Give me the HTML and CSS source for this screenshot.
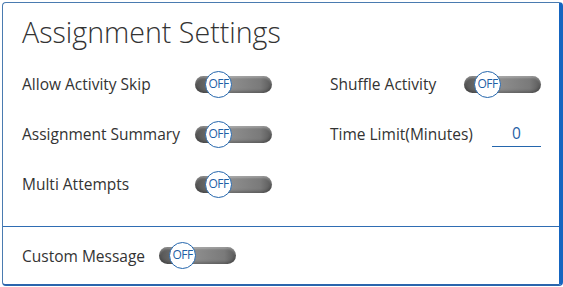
FILE: index.html
```html
<!DOCTYPE html>
<html lang="en">
<head>
    <meta charset="UTF-8">
    <meta name="viewport" content="width=device-width, initial-scale=1.0">
    <title>Assignment Settings</title>
    <link rel="stylesheet" href="styles.css">
</head>
<body>

<div class="card">
    <div class="card-top">
        <h1 class="title">Assignment Settings</h1>
        <div class="settings">
            <span class="label">Allow Activity Skip</span>
            <div class="toggle"><span class="knob">OFF</span></div>
            <span class="label">Shuffle Activity</span>
            <div class="toggle"><span class="knob">OFF</span></div>

            <span class="label">Assignment Summary</span>
            <div class="toggle"><span class="knob">OFF</span></div>
            <span class="label">Time Limit(Minutes)</span>
            <div class="time-input"><input type="text" value="0"></div>

            <span class="label">Multi Attempts</span>
            <div class="toggle"><span class="knob">OFF</span></div>
        </div>
    </div>
    <div class="card-bottom">
        <span class="label">Custom Message</span>
        <div class="toggle"><span class="knob">OFF</span></div>
    </div>
</div>

</body>
</html>
```

FILE: styles.css
```css
body {
    margin: 0;
    padding: 2px 0 0 2px;
    font-family: "Open Sans", "Liberation Sans", sans-serif;
    color: #333;
    background: #fff;
}
.card {
    width: 561px;
    height: 284px;
    box-sizing: border-box;
    border: 1px solid #4a7bb0;
    border-right: 4px solid #1565c0;
    border-bottom: 2px solid #2a65ad;
    border-radius: 4px;
    display: flex;
    flex-direction: column;
}
.card-top {
    padding: 11px 0 17px 19px;
    border-bottom: 1px solid #2f6db3;
}
.title {
    margin: 0 0 9px 0;
    font-size: 28.6px;
    font-weight: 300;
    line-height: 36px;
    color: #333;
}
.settings {
    display: grid;
    grid-template-columns: 173px 135px 134px 77px;
    grid-auto-rows: 50px;
    align-items: center;
}
.label {
    font-size: 15.5px;
    white-space: nowrap;
}
.toggle {
    position: relative;
    width: 77px;
    height: 17px;
    border-radius: 9px;
    background: linear-gradient(to right, #555, #8e8e8e 45%, #7a7a7a 85%, #5a5a5a);
    box-shadow: inset 0 2px 2px rgba(255, 255, 255, 0.25), inset 0 -2px 3px rgba(0, 0, 0, 0.25);
}
.knob {
    position: absolute;
    left: 10px;
    top: -5px;
    width: 27px;
    height: 27px;
    box-sizing: border-box;
    border: 1.5px solid #2466ad;
    border-radius: 50%;
    background: #fff;
    color: #1f5fa6;
    font-size: 12px;
    line-height: 24px;
    text-align: center;
    letter-spacing: -0.5px;
}
.time-input input {
    width: 49px;
    box-sizing: border-box;
    margin-left: 28px;
    border: none;
    border-bottom: 1px solid #2466ad;
    padding: 0 0 2px 0;
    font-family: inherit;
    font-size: 15.5px;
    color: #1f5fa6;
    text-align: center;
    outline: none;
}
.card-bottom {
    flex: 1;
    display: flex;
    align-items: center;
    gap: 14px;
    padding-left: 19px;
}
```
